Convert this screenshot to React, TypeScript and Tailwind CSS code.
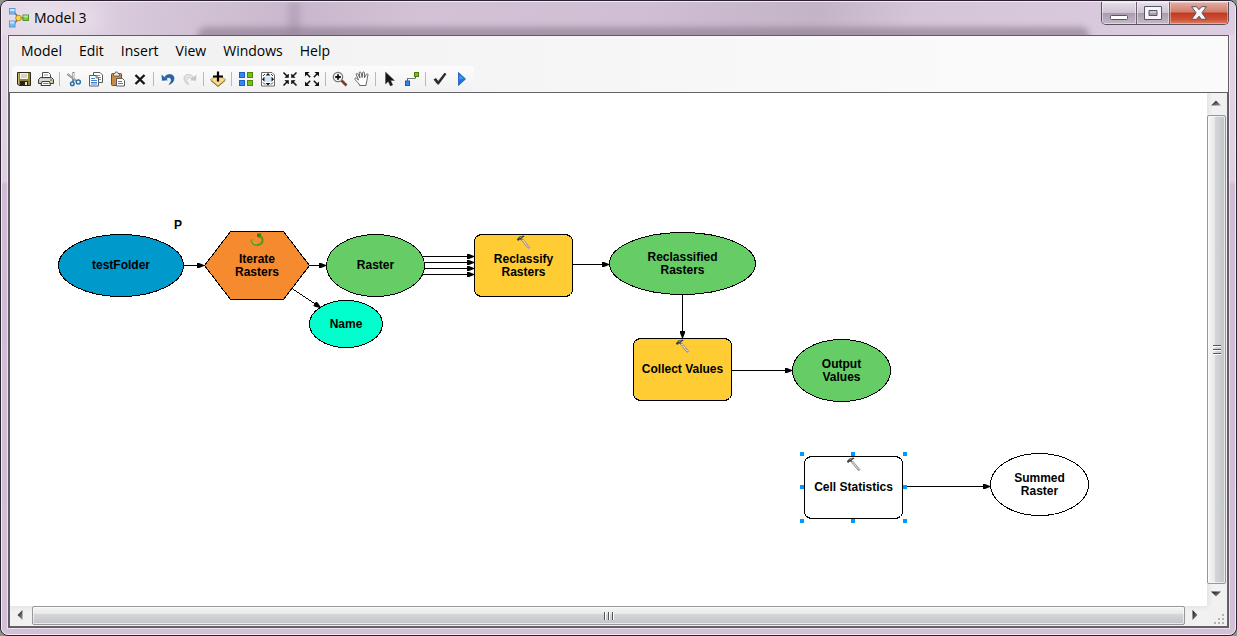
import type { ReactNode } from "react";

/* ---------- toolbar icons ---------- */

function Icon({ children, crisp = false }: { children: ReactNode; crisp?: boolean }) {
  return (
    <svg viewBox="0 0 16 16" className="size-4" fill="none" shapeRendering={crisp ? "crispEdges" : "auto"} aria-hidden="true">
      {children}
    </svg>
  );
}

const SaveIcon = () => (
  <Icon>
    <path d="M1.5 1.5H14.5V14.5H3L1.5 13Z" fill="#94803f" stroke="#2d2919" />
    <rect x="4" y="2" width="8" height="6" fill="#f4f1e6" />
    <path d="M5 4H11M5 6H11" stroke="#b9b39b" />
    <rect x="4" y="10" width="8" height="4.5" fill="#26231a" />
    <rect x="9" y="11" width="2" height="3" fill="#e9e6da" />
    <path d="M2.5 2V13" stroke="#c6b268" />
  </Icon>
);

const PrintIcon = () => (
  <Icon>
    <path d="M4.5 7V1.5H10.5L12.5 3.5V7" fill="#fff" stroke="#4c4c4c" />
    <path d="M6 4H10" stroke="#9a9a9a" />
    <path d="M2.5 6.5H13.5L15.5 8.5V12.5H.5V8.5Z" fill="#c9c6bb" stroke="#3f3e3a" />
    <path d="M2 9H14" stroke="#efeee8" />
    <rect x="12" y="8" width="2" height="2" fill="#6fb52c" />
    <path d="M4 10.5H11.5L12.5 14.5H3Z" fill="#fff" stroke="#3f3e3a" />
    <path d="M5 12.5H10.5" stroke="#4b8ed0" />
  </Icon>
);

const CutIcon = () => (
  <Icon>
    <path d="M1.500 3L10.500 10" stroke="#6d7075" strokeWidth="2" />
    <path d="M2 3.200L10 9.500" stroke="#e6e8ea" strokeWidth=".8" />
    <path d="M7.500 1L7 11" stroke="#7d8085" strokeWidth="2" />
    <path d="M7.500 2L7.200 8" stroke="#f2f3f4" strokeWidth=".9" />
    <circle cx="6.300" cy="12.800" r="1.800" fill="#fff" stroke="#2671ad" strokeWidth="1.500" />
    <circle cx="12.300" cy="11" r="2" fill="#fff" stroke="#2671ad" strokeWidth="1.500" />
  </Icon>
);

const CopyIcon = () => (
  <Icon>
    <path d="M5.500 1.500H12L14.500 4V11.500H5.500Z" fill="#fff" stroke="#585d63" />
    <path d="M7 4.500H12M7 6.500H13M7 8.500H13" stroke="#5b9bd8" />
    <path d="M1.500 4.500H8L10.500 7V15H1.500Z" fill="#fff" stroke="#585d63" />
    <path d="M3 7.500H7M3 9.500H9M3 11.500H9M3 13H9" stroke="#3f86cf" />
    <path d="M8 4.500V7H10.500" stroke="#585d63" strokeWidth=".8" />
  </Icon>
);

const PasteIcon = () => (
  <Icon>
    <rect x="1.500" y="2.500" width="10" height="12" rx="1" fill="#c98b45" stroke="#7a4b1c" />
    <path d="M3.500 5V2.500H5L5.500 1H7.500L8 2.500H9.500V5Z" fill="#ebebeb" stroke="#57534c" strokeWidth=".8" />
    <path d="M6.500 7.500H12.500L14.500 9.500V15H6.500Z" fill="#fff" stroke="#585d63" />
    <path d="M8 10.500H12M8 12.500H13" stroke="#3f86cf" />
  </Icon>
);

const DeleteIcon = () => (
  <Icon>
    <path d="M3.500 4L12.500 13M12.500 4L3.500 13" stroke="#151515" strokeWidth="2.300" />
  </Icon>
);

const UndoIcon = () => (
  <Icon>
    <path d="M5 5.500C8 2.200 14 3 14 7.200C14 10.500 12 12.500 9 13.500C11 11.500 11.800 9.500 11 7.800C10 6 7.500 6.300 6 7.800Z" fill="#2264ad" stroke="#174c8c" strokeWidth=".6" />
    <path d="M1.500 3.500L2 9.800L8 9.200Z" fill="#2264ad" />
  </Icon>
);

const RedoIcon = () => (
  <Icon>
    <path d="M11 5.500C8 2.200 2 3 2 7.200C2 10.500 4 12.500 7 13.500C5 11.500 4.200 9.500 5 7.800C6 6 8.500 6.300 10 7.800Z" fill="#e4e4e4" stroke="#b5b5b5" strokeWidth=".6" />
    <path d="M14.500 3.500L14 9.800L8 9.200Z" fill="#c6c6c6" />
  </Icon>
);

const AddDataIcon = () => (
  <Icon>
    <path d="M.5 8.500L8 4L15.500 8.500L8 15Z" fill="#f7d98e" stroke="#b98b3c" strokeWidth=".8" />
    <path d="M.8 9.500L8 15.500L15.200 9.500" stroke="#8c6526" strokeWidth="1" />
    <path d="M8 .5V10.500M3 5.500H13" stroke="#000" strokeWidth="2.200" />
  </Icon>
);

const LayoutIcon = () => (
  <Icon crisp>
    <rect x="1" y="1" width="6" height="6" fill="#1c5fc4" />
    <rect x="2" y="2" width="4" height="4" fill="#3487ee" />
    <rect x="9" y="1" width="6" height="6" fill="#4c8a0a" />
    <rect x="10" y="2" width="4" height="4" fill="#7cbd1c" />
    <rect x="1" y="9" width="6" height="6" fill="#1c5fc4" />
    <rect x="2" y="10" width="4" height="4" fill="#3487ee" />
    <rect x="9" y="9" width="6" height="6" fill="#4c8a0a" />
    <rect x="10" y="10" width="4" height="4" fill="#7cbd1c" />
  </Icon>
);

const FullExtentIcon = () => (
  <Icon>
    <path d="M1.500 1.500H12L14.500 4V15H1.500Z" fill="#fff" stroke="#6a6a6a" />
    <rect x="5" y="5.500" width="6" height="5.500" fill="#cfe7f7" />
    <path d="M8 2L10.500 4.500H5.500ZM8 14.500L5.500 12H10.500ZM2 8.200L4.500 5.700V10.700ZM14 8.200L11.500 5.700V10.700Z" fill="#111" />
    <path d="M3 5L5 3M11 3L13 5M3 11.500L5 13.500M13 11.500L11 13.500" stroke="#333" />
  </Icon>
);

const ZoomInFixedIcon = () => (
  <Icon>
    <path d="M6.500 3V6.500H3ZM9.500 3V6.500H13ZM6.500 13V9.500H3ZM9.500 13V9.500H13Z" fill="#111" stroke="#111" strokeWidth=".6" />
    <path d="M1.500 1.500L5 5M14.500 1.500L11 5M1.500 14.500L5 11M14.500 14.500L11 11" stroke="#111" strokeWidth="1.500" />
  </Icon>
);

const ZoomOutFixedIcon = () => (
  <Icon>
    <path d="M1 1H5.500L1 5.500ZM15 1H10.500L15 5.500ZM1 15H5.500L1 10.500ZM15 15H10.500L15 10.500Z" fill="#111" />
    <path d="M3 3L6.200 6.200M13 3L9.800 6.200M3 13L6.200 9.800M13 13L9.800 9.800" stroke="#111" strokeWidth="1.500" />
  </Icon>
);

const MagnifierIcon = () => (
  <Icon>
    <path d="M9.500 9.500L14.500 14.500" stroke="#7b3d2c" strokeWidth="2.600" />
    <circle cx="6" cy="6" r="4.700" fill="#edf3f8" stroke="#77797c" strokeWidth="1.200" />
    <path d="M6 3.200V8.800M3.200 6H8.800" stroke="#111" strokeWidth="1.800" />
  </Icon>
);

const HandIcon = () => (
  <Icon>
    <path
      d="M5.500 14.500C5.500 12.500 3 11 1 8.500C.3 7.300 1.800 6.500 2.800 7.500L4.500 9L2.200 3.600C1.900 2.300 3.400 1.900 3.900 3L6 7L5.200 1.900C5.200.6 6.800.6 7 1.800L8.200 6.500L8.700 1.600C9 .5 10.400.7 10.400 1.900L10.500 6.800L12.400 3.300C13 2.300 14.300 2.900 13.900 4.100C13 7 13.500 8.500 12.500 11L12 14.500Z"
      fill="#fff"
      stroke="#555"
      strokeWidth=".9"
    />
  </Icon>
);

const PointerIcon = () => (
  <Icon>
    <path d="M3.500 1V13L6.300 10.400L8.300 15L10.700 14L8.700 9.500H12.500Z" fill="#161616" stroke="#555" strokeWidth=".5" />
  </Icon>
);

const ConnectIcon = () => (
  <Icon>
    <path d="M3.500 10V7.500H11.500V5" stroke="#777" />
    <rect x="3" y="7.500" width="1" height="2" fill="#e22" />
    <rect x="11" y="5" width="1" height="2" fill="#e22" />
    <rect x="1.500" y="10" width="4" height="4.500" fill="#3585e8" stroke="#1b58b5" />
    <rect x="10.500" y="1.500" width="4" height="4" fill="#7cbd1c" stroke="#4a7e0b" />
  </Icon>
);

const CheckIcon = () => (
  <Icon>
    <path d="M1.500 8.500L4 7L6.200 10L12.500 1.800L14.500 3L6.800 13.500H5.500Z" fill="#2d2d2d" />
  </Icon>
);

const PlayIcon = () => (
  <Icon>
    <path d="M4.500 1.500L11.500 8L4.500 14.500Z" fill="#1c74de" stroke="#155cb9" strokeWidth=".8" />
    <path d="M5.500 4L9.500 7.500L5.500 8.500Z" fill="#4c9bf2" />
  </Icon>
);

const toolGroups: { label: string; icon: ReactNode }[][] = [
  [
    { label: "Save", icon: <SaveIcon /> },
    { label: "Print", icon: <PrintIcon /> },
  ],
  [
    { label: "Cut", icon: <CutIcon /> },
    { label: "Copy", icon: <CopyIcon /> },
    { label: "Paste", icon: <PasteIcon /> },
    { label: "Delete", icon: <DeleteIcon /> },
  ],
  [
    { label: "Undo", icon: <UndoIcon /> },
    { label: "Redo", icon: <RedoIcon /> },
  ],
  [{ label: "Add data or tool", icon: <AddDataIcon /> }],
  [
    { label: "Auto layout", icon: <LayoutIcon /> },
    { label: "Full extent", icon: <FullExtentIcon /> },
    { label: "Fixed zoom in", icon: <ZoomInFixedIcon /> },
    { label: "Fixed zoom out", icon: <ZoomOutFixedIcon /> },
  ],
  [
    { label: "Zoom in", icon: <MagnifierIcon /> },
    { label: "Pan", icon: <HandIcon /> },
  ],
  [
    { label: "Select", icon: <PointerIcon /> },
    { label: "Connect", icon: <ConnectIcon /> },
  ],
  [
    { label: "Validate", icon: <CheckIcon /> },
    { label: "Run", icon: <PlayIcon /> },
  ],
];

/* ---------- title bar ---------- */

function AppIcon() {
  return (
    <svg viewBox="0 0 20 20" className="size-5" aria-hidden="true">
      <path d="M5 4L9 9M5 16L9 11M12 10H15" stroke="#6a6a6a" strokeWidth="1.400" />
      <rect x=".5" y=".5" width="5.500" height="5.500" fill="#7ab8f0" stroke="#5a9bd6" />
      <rect x=".5" y="13" width="5.500" height="6" fill="#7ab8f0" stroke="#5a9bd6" />
      <path d="M1 1H5.500V3H1ZM1 13.500H5.500V15.500H1Z" fill="#cde6fb" />
      <circle cx="9.500" cy="10" r="2.800" fill="#f7d552" stroke="#b78a17" />
      <rect x="14" y="7" width="5.500" height="5.500" fill="#7fc843" stroke="#4f962b" />
      <path d="M14.500 7.500H19V9.500H14.500Z" fill="#b9e58e" />
    </svg>
  );
}

function TitleBar() {
  return (
    <header className="relative flex h-[33px] shrink-0 items-start justify-between overflow-hidden bg-[linear-gradient(100deg,#e6dbe8_0%,#d6c6d9_12%,#c9b8cd_24%,#d3c1d6_34%,#d0bed4_52%,#c3b4c7_66%,#d5c5d9_74%,#dccde0_100%)]">
      <div className="absolute inset-y-0 left-[286px] w-3 bg-[#9c8aa0]/40 blur-[3px]" />
      <div className="absolute -bottom-2 left-[196px] right-[146px] h-4 rounded-t-lg bg-[#8d7b91]/65 blur-[3px]" />
      <div className="absolute left-5 top-1 h-6 w-20 bg-white/40 blur-md" />
      <div className="relative flex items-center gap-[5px] pl-[7px] pt-[6px]">
        <AppIcon />
        <h1 className="text-[14px] leading-5 text-black">Model 3</h1>
      </div>
      <div className="relative mr-[6px] flex h-[23px] overflow-hidden rounded-b-[5px] border border-t-0 border-[#5b5060]">
        <button aria-label="Minimize" className="flex w-[35px] items-end justify-center border-r border-[#6a6070] bg-[linear-gradient(#e6e0e9_0%,#cdc4d1_48%,#a79bac_50%,#c4b8c9_100%)] pb-[3px] shadow-[inset_0_0_0_1px_rgba(255,255,255,0.45)]">
          <svg viewBox="0 0 18 6" className="h-[6px] w-[18px]" aria-hidden="true">
            <rect x=".5" y=".5" width="17" height="4" rx="1" fill="#fff" stroke="#545567" />
          </svg>
        </button>
        <button aria-label="Maximize" className="flex w-[33px] items-center justify-center border-r border-[#6a6070] bg-[linear-gradient(#e6e0e9_0%,#cdc4d1_48%,#a79bac_50%,#c4b8c9_100%)] shadow-[inset_0_0_0_1px_rgba(255,255,255,0.45)]">
          <svg viewBox="0 0 18 14" className="h-[14px] w-[18px]" aria-hidden="true">
            <path fillRule="evenodd" d="M.5.5H17.500V13.500H.5ZM5 4.500H13V9.500H5Z" fill="#f6f6f8" stroke="#545567" />
          </svg>
        </button>
        <button aria-label="Close" className="flex w-[58px] items-center justify-center bg-[linear-gradient(#e3aea3_0%,#d27b6b_46%,#bf3a20_50%,#cf5236_80%,#dd8167_100%)] shadow-[inset_0_0_0_1px_rgba(255,255,255,0.35)]">
          <svg viewBox="0 0 16 14" className="h-[14px] w-4" aria-hidden="true">
            <path d="M.6.7H5.500L8 3.700L10.500.7H15.400L10.900 6.900L15.400 13.300H10.500L8 10.200L5.500 13.300H.6L5.100 6.900Z" fill="#f6f6f8" stroke="#545567" />
          </svg>
        </button>
      </div>
    </header>
  );
}

/* ---------- model diagram ---------- */

type Shape = "ellipse" | "box" | "hexagon";

type ModelNode = {
  label: string;
  shape: Shape;
  w: number;
  h: number;
  place: string;
  fill: string;
  badge?: "hammer" | "loop";
};

const nodes: ModelNode[] = [
  { label: "testFolder", shape: "ellipse", w: 126, h: 63, place: "left-[48px] top-[141px] w-[126px] h-[63px]", fill: "#0099cc" },
  { label: "Iterate Rasters", shape: "hexagon", w: 106, h: 69, place: "left-[194px] top-[138px] w-[106px] h-[69px] px-5", fill: "#f58a2e", badge: "loop" },
  { label: "Raster", shape: "ellipse", w: 99, h: 63, place: "left-[316px] top-[141px] w-[99px] h-[63px]", fill: "#66cc66" },
  { label: "Name", shape: "ellipse", w: 74, h: 48, place: "left-[299px] top-[207px] w-[74px] h-[48px]", fill: "#00ffcc" },
  { label: "Reclassify Rasters", shape: "box", w: 99, h: 63, place: "left-[464px] top-[141px] w-[99px] h-[63px] px-3", fill: "#ffcc33", badge: "hammer" },
  { label: "Reclassified Rasters", shape: "ellipse", w: 147, h: 63, place: "left-[599px] top-[139px] w-[147px] h-[63px] px-8", fill: "#66cc66" },
  { label: "Collect Values", shape: "box", w: 99, h: 63, place: "left-[623px] top-[245px] w-[99px] h-[63px]", fill: "#ffcc33", badge: "hammer" },
  { label: "Output Values", shape: "ellipse", w: 99, h: 63, place: "left-[782px] top-[246px] w-[99px] h-[63px] px-6", fill: "#66cc66" },
  { label: "Cell Statistics", shape: "box", w: 99, h: 63, place: "left-[794px] top-[363px] w-[99px] h-[63px]", fill: "#ffffff", badge: "hammer" },
  { label: "Summed Raster", shape: "ellipse", w: 99, h: 63, place: "left-[980px] top-[360px] w-[99px] h-[63px] px-6", fill: "#ffffff" },
];

function NodeShape({ shape, w, h, fill }: { shape: Shape; w: number; h: number; fill: string }) {
  const r = w - 0.5;
  const b = h - 0.5;
  return (
    <svg viewBox={`0 0 ${w} ${h}`} className="absolute inset-0 size-full" fill={fill} stroke="#000" shapeRendering="crispEdges" aria-hidden="true">
      {shape === "ellipse" && <ellipse cx={w / 2} cy={h / 2} rx={w / 2 - 0.5} ry={h / 2 - 0.5} />}
      {shape === "hexagon" && <path d={`M26.5 .5H${r - 26}L${r} ${h / 2}L${r - 26} ${b}H26.5L.5 ${h / 2}Z`} />}
      {shape === "box" && (
        <path d={`M6.5 .5H${r - 6}L${r - 2} 2.500L${r} 5.500V${b - 5}L${r - 2} ${b - 2}L${r - 6} ${b}H6.500L2.500 ${b - 2}L.5 ${b - 5}V5.500L2.500 2.500Z`} />
      )}
    </svg>
  );
}

function Hammer() {
  return (
    <svg viewBox="0 0 16 16" className="absolute left-1/2 top-px -ml-2 size-4" aria-hidden="true">
      <path d="M6 4.500L13.500 13.500" stroke="#77706a" strokeWidth="2.400" />
      <path d="M6.500 5L13.500 13.500" stroke="#f0e8dc" strokeWidth="1.500" strokeDasharray="1.500 .5" />
      <path d="M.8 4.200L3.500 1.500L7.500.5L8.500 1.500L6 3L5.500 5L4 4.500L2 6Z" fill="#3d3d42" />
      <path d="M3.500 3L6 1.500" stroke="#b5b9c0" strokeWidth=".8" />
    </svg>
  );
}

function Loop() {
  return (
    <svg viewBox="0 0 16 16" className="absolute left-1/2 top-px -ml-2 size-4" aria-hidden="true">
      <path d="M2.500 7.500C2.500 11 5 13 8 13C11.500 13 14 11 13.500 7.500C13.200 5.500 12 4.300 10.500 3.500" stroke="#4d9a1e" strokeWidth="2" fill="none" />
      <path d="M3 8.500C3.500 10.800 5.500 12 8 12" stroke="#a7d36a" strokeWidth=".9" fill="none" />
      <path d="M8 1.500H12.500L10.500 6L8 4.500Z" fill="#3c7f14" />
    </svg>
  );
}

const handles = [
  "left-[790px] top-[359px]",
  "left-[841px] top-[359px]",
  "left-[893px] top-[359px]",
  "left-[790px] top-[392px]",
  "left-[893px] top-[392px]",
  "left-[790px] top-[426px]",
  "left-[841px] top-[426px]",
  "left-[893px] top-[426px]",
];

const links = [
  "M174 172.5H194",
  "M299 172.5H316",
  "M282 195.5L310.5 214.5",
  "M412 163.5H464",
  "M414 169.5H464",
  "M414 175.5H464",
  "M412 181.5H464",
  "M563 171.5H599",
  "M672.5 202V245",
  "M722 277.5H782",
  "M893 393.5H980",
];

function Connectors() {
  return (
    <svg viewBox="0 0 1100 440" className="absolute left-0 top-0 h-[440px] w-[1100px]" stroke="#000" fill="none" shapeRendering="crispEdges" aria-hidden="true">
      <defs>
        <marker id="head" markerUnits="userSpaceOnUse" markerWidth="8" markerHeight="6" refX="7" refY="2.500" orient="auto">
          <path d="M0 0H2L7 2V3L2 5H0Z" fill="#000" stroke="none" shapeRendering="auto" />
        </marker>
      </defs>
      {links.map((d) => (
        <path key={d} d={d} markerEnd="url(#head)" />
      ))}
    </svg>
  );
}

function Canvas() {
  return (
    <main className="relative min-w-0 flex-1 overflow-hidden bg-white">
      <Connectors />
      {nodes.map((n) => (
        <div key={n.label} className={`absolute flex items-center justify-center text-center text-[12px] font-bold leading-[13px] text-black ${n.place}`}>
          <NodeShape shape={n.shape} w={n.w} h={n.h} fill={n.fill} />
          {n.badge === "hammer" && <Hammer />}
          {n.badge === "loop" && <Loop />}
          <span className="relative">{n.label}</span>
        </div>
      ))}
      <span className="absolute left-[164px] top-[126px] text-[12px] font-bold leading-[13px] text-black">P</span>
      {handles.map((h) => (
        <span key={h} className={`absolute size-1 bg-[#0099ff] ${h}`} />
      ))}
    </main>
  );
}

/* ---------- scroll bars ---------- */

function ScrollArrow({ label, d }: { label: string; d: string }) {
  return (
    <button aria-label={label} className="flex size-[22px] shrink-0 items-center justify-center pb-[2px] pr-[2px]">
      <svg viewBox="0 0 10 10" className="size-[10px]" aria-hidden="true">
        <defs>
          <linearGradient id="arrow" x1="0" y1="0" x2="1" y2="1">
            <stop offset="0" stopColor="#111" />
            <stop offset="1" stopColor="#999" />
          </linearGradient>
        </defs>
        <path d={d} fill="url(#arrow)" />
      </svg>
    </button>
  );
}

function VerticalScroll() {
  return (
    <div className="flex w-5 shrink-0 flex-col items-center bg-[linear-gradient(90deg,#e6e6e6,#f2f2f2_30%,#f0f0f0)]">
      <ScrollArrow label="Scroll up" d="M0 7.500L5 2.500L10 7.500Z" />
      <div className="flex w-[19px] flex-1 flex-col items-center justify-center gap-[2px] self-start rounded-[2px] border border-[#97979b] bg-[linear-gradient(90deg,#f5f5f5_0%,#e9e9eb_38%,#d5d6d9_42%,#c3c4c8_100%)] shadow-[inset_0_0_0_1px_rgba(255,255,255,0.6)]">
        <span className="h-[2px] w-2 border-t border-[#55565a] bg-white" />
        <span className="h-[2px] w-2 border-t border-[#55565a] bg-white" />
        <span className="h-[2px] w-2 border-t border-[#55565a] bg-white" />
      </div>
      <ScrollArrow label="Scroll down" d="M0 2.500L5 7.500L10 2.500Z" />
    </div>
  );
}

function HorizontalScroll() {
  return (
    <div className="flex h-5 shrink-0 items-center bg-[linear-gradient(#e6e6e6,#f2f2f2_30%,#f0f0f0)]">
      <ScrollArrow label="Scroll left" d="M7.500 0L2.500 5L7.500 10Z" />
      <div className="flex h-[19px] flex-1 items-center justify-center gap-[2px] self-start rounded-[2px] border border-[#97979b] bg-[linear-gradient(#f5f5f5_0%,#e9e9eb_38%,#d5d6d9_42%,#c3c4c8_100%)] shadow-[inset_0_0_0_1px_rgba(255,255,255,0.6)]">
        <span className="h-2 w-[2px] border-l border-[#55565a] bg-white" />
        <span className="h-2 w-[2px] border-l border-[#55565a] bg-white" />
        <span className="h-2 w-[2px] border-l border-[#55565a] bg-white" />
      </div>
      <ScrollArrow label="Scroll right" d="M2.500 0L7.500 5L2.500 10Z" />
      <div className="flex size-5 items-end justify-end bg-[#f0f0f0] p-px">
        <svg viewBox="0 0 12 12" className="size-3" fill="#b3b3b3" shapeRendering="crispEdges" aria-hidden="true">
          <path d="M8 1h2v2h-2zM8 5h2v2h-2zM8 9h2v2h-2zM4 5h2v2h-2zM4 9h2v2h-2zM0 9h2v2h-2z" />
        </svg>
      </div>
    </div>
  );
}

/* ---------- window ---------- */

const menus = ["Model", "Edit", "Insert", "View", "Windows", "Help"];

export default function App() {
  return (
    <div className="h-screen bg-[#8e938c] font-['Liberation_Sans',Arial,sans-serif]">
      <div className="flex h-full flex-col overflow-hidden rounded-[8px] border border-[#2b2230] bg-[linear-gradient(#e2d6e5_0px,#ddd0e0_180px,#cfbbd3_184px,#d3c0d6_100%)] font-['Open_Sans','Noto_Sans',sans-serif]">
        <div className="flex min-h-0 flex-1 flex-col rounded-[7px] border border-[#f3eaf5]">
          <TitleBar />
          <div className="mx-[6px] mb-[6px] flex min-h-0 flex-1 flex-col border border-[#5f5d63] shadow-[0_0_0_1px_rgba(255,255,255,0.55)]">
            <div className="shrink-0 bg-[linear-gradient(90deg,#f0f0f0,#fafafa_80%)] pb-px">
              <nav className="flex h-[30px] items-center gap-px pl-1">
                {menus.map((m) => (
                  <button key={m} className="px-2 text-[14px] leading-5 text-black">
                    {m}
                  </button>
                ))}
              </nav>
              <div role="toolbar" aria-label="Model tools" className="ml-[3px] flex h-[25px] w-fit items-center rounded-[3px] bg-[linear-gradient(#fcfcfc,#f1f1f1)] px-px">
                {toolGroups.map((group, i) => (
                  <div key={group[0].label} className="flex items-center">
                    {i > 0 && (
                      <span className="flex w-[6px] pl-[2px]">
                        <span className="h-[14px] w-px bg-[#b9b9b9]" />
                      </span>
                    )}
                    {group.map((t) => (
                      <button key={t.label} aria-label={t.label} className="flex h-[22px] w-[22px] items-center justify-center">
                        {t.icon}
                      </button>
                    ))}
                  </div>
                ))}
              </div>
            </div>
            <div className="flex min-h-0 flex-1 flex-col border border-[#646268]">
              <div className="flex min-h-0 flex-1 font-['Liberation_Sans',Arial,sans-serif]">
                <Canvas />
                <VerticalScroll />
              </div>
              <HorizontalScroll />
            </div>
          </div>
        </div>
      </div>
    </div>
  );
}
